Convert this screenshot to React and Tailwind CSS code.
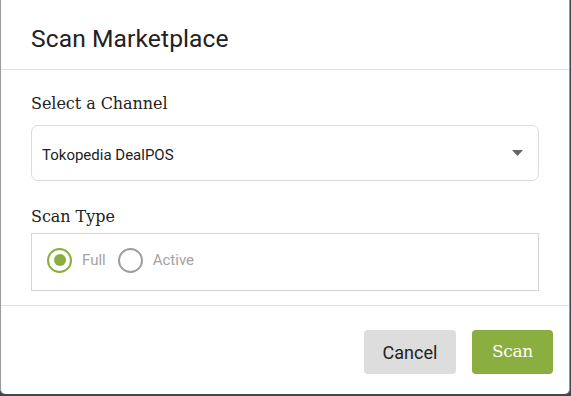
export default function App() {
  return (
    <div className="w-[571px] h-[396px] bg-[#3a4a55] relative overflow-hidden">
      <div className="absolute left-0 top-0 w-[570px] h-[394px] bg-white border-l border-r border-[#9a9a9a] rounded-b-[5px] flex flex-col">
        <div className="h-[70px] border-b border-[#e2e2e2] flex items-center pl-[30px] pt-[9px]">
          <h1 className="text-[24.6px] text-[#222] font-['Roboto',sans-serif] tracking-[0.1px]">Scan Marketplace</h1>
        </div>
        <div className="px-[30px] pt-[22px] h-[236px] border-b border-[#e2e2e2]">
          <div className="text-[16px] leading-[24px] text-[#222] font-['DejaVu_Serif',serif] tracking-[-0.05px]">Select a Channel</div>
          <div className="mt-[9px] h-[56px] border border-[#dcdcdc] rounded-[7px] flex items-center justify-between pl-[10px] pr-[15px]">
            <span className="text-[15px] text-[#222] font-['Roboto',sans-serif] pt-[4px]">Tokopedia DealPOS</span>
            <svg width="11" height="6" viewBox="0 0 11 6"><path d="M0 0 L11 0 L5.5 6 Z" fill="#666" /></svg>
          </div>
          <div className="mt-[24px] text-[16px] leading-[24px] text-[#222] font-['DejaVu_Serif',serif] tracking-[-0.05px]">Scan Type</div>
          <div className="mt-[4px] h-[58px] border border-[#d4d4d8] flex items-center pl-[15px] pb-[4px] gap-[12px]">
            <div className="flex items-center gap-[10px]">
              <span className="w-[25px] h-[25px] rounded-full border-[2.5px] border-[#8aae3f] flex items-center justify-center">
                <span className="w-[12px] h-[12px] rounded-full bg-[#8aae3f]" />
              </span>
              <span className="text-[15px] text-[#a3a3a3] font-['Roboto',sans-serif]">Full</span>
            </div>
            <div className="flex items-center gap-[10px]">
              <span className="w-[25px] h-[25px] rounded-full border-[2.5px] border-[#9e9e9e]" />
              <span className="text-[15px] text-[#a3a3a3] font-['Roboto',sans-serif]">Active</span>
            </div>
          </div>
        </div>
        <div className="flex justify-end gap-[16px] pt-[24px] pr-[16px]">
          <button className="w-[92px] h-[44px] rounded-[4px] bg-[#dddddd] text-[18px] text-[#222] font-['Roboto',sans-serif]">Cancel</button>
          <button className="w-[81px] h-[44px] rounded-[4px] bg-[#8aae3f] text-[17px] text-white font-['DejaVu_Serif',serif] tracking-[-0.3px]">Scan</button>
        </div>
      </div>
    </div>
  );
}
